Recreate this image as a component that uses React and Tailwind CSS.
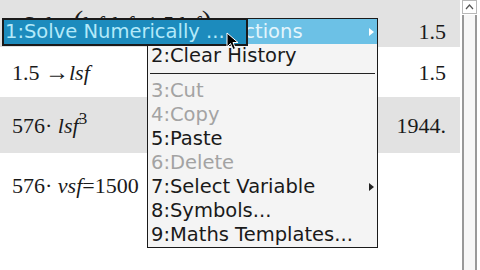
import React from 'react'

const sans = { fontFamily: '"DejaVu Sans", Verdana, sans-serif' }
const serif = { fontFamily: '"Liberation Serif", "Times New Roman", serif' }

const items = [
  { label: '3:Cut', off: true },
  { label: '4:Copy', off: true },
  { label: '5:Paste' },
  { label: '6:Delete', off: true },
  { label: '7:Select Variable', sub: true },
  { label: '8:Symbols...' },
  { label: '9:Maths Templates...' },
]

const Arrow = ({ color }) => (
  <svg width="5" height="8" viewBox="0 0 5 8" className="absolute right-[3px] top-1/2 -translate-y-1/2">
    <path d="M0 0 L5 4 L0 8 Z" fill={color} />
  </svg>
)

const App = () => {
  return (
    <div className="relative w-[480px] h-[270px] bg-white overflow-hidden flex text-[#1a1a1a]">
      {/* history rows */}
      <div className="w-[460px] flex flex-col" style={serif}>
        <div className="h-[47px] bg-[#e2e2e2] flex justify-between pl-[12px] pr-[14px]">
          <div className="mt-[6px] text-[22px] leading-none whitespace-nowrap">
            nSolve<span className="text-[30px]">(</span>lsf·lsf=1.5,lsf<span className="text-[30px]">)</span>
          </div>
          <div className="mt-[21px] text-[22px] leading-none">1.5</div>
        </div>
        <div className="h-[50px] flex items-center justify-between pl-[12px] pr-[14px] text-[22px]">
          <div>1.5 <span className="text-[24px]">→</span><i>lsf</i></div>
          <div>1.5</div>
        </div>
        <div className="h-[56px] bg-[#e2e2e2] flex items-center justify-between pl-[12px] pr-[14px] text-[22px]">
          <div>576· <i>lsf</i><sup className="text-[17px]">3</sup></div>
          <div>1944.</div>
        </div>
        <div className="flex-1 pl-[12px] pt-[16px] text-[22px]">
          <div>576· <i>vsf</i>=1500</div>
        </div>
      </div>

      {/* scrollbar */}
      <div className="w-[20px] flex flex-col pl-[2px] pr-[3px]">
        <div className="h-[14px] border border-[#b8b8b8] bg-white flex items-center justify-center">
          <svg width="9" height="6" viewBox="0 0 9 6">
            <path d="M1 5 L4.5 1 L8 5" fill="none" stroke="#555" strokeWidth="1.2" />
          </svg>
        </div>
        <div className="flex-1 mt-[1px] border-x-2 border-[#999] bg-[#f7f7f7]" />
      </div>

      {/* context menu */}
      <div className="absolute left-[147px] top-[18px] w-[231px] border border-[#1a1a1a] bg-[#f4f4f4] text-[19.5px] leading-none" style={sans}>
        <div className="relative h-[25px] bg-[#6cc1e6] text-[#e4f5fc] flex items-center pl-[3px] whitespace-nowrap">
          1:Quick Actions
          <Arrow color="#ffffff" />
        </div>
        <div className="h-[24px] flex items-center pl-[3px]">2:Clear History</div>
        <div className="h-[11px] flex items-start pt-[5px] px-[2px]">
          <div className="h-[1px] w-full bg-[#222]" />
        </div>
        {items.map((it) => (
          <div key={it.label} className={`relative h-[24px] flex items-center pl-[3px] ${it.off ? 'text-[#a3a3a3]' : ''}`}>
            {it.label}
            {it.sub && <Arrow color="#222" />}
          </div>
        ))}
      </div>

      {/* submenu */}
      <div className="absolute left-[2px] top-[18px] w-[246px] h-[28px] border-2 border-[#1a1a1a] bg-[#1c8bbd] text-[#b3e9f9] text-[19.5px] leading-none flex items-center pl-[1px] whitespace-nowrap" style={sans}>
        1:Solve Numerically ...
      </div>

      {/* mouse pointer */}
      <svg className="absolute left-[226px] top-[32px]" width="14" height="20" viewBox="0 0 14 20">
        <path d="M1 1 L1 15 L4.5 11.5 L7 17.5 L9.5 16.5 L7 10.5 L12 10.5 Z" fill="#000" stroke="#fff" strokeWidth="1" />
      </svg>
    </div>
  )
}

export default App
